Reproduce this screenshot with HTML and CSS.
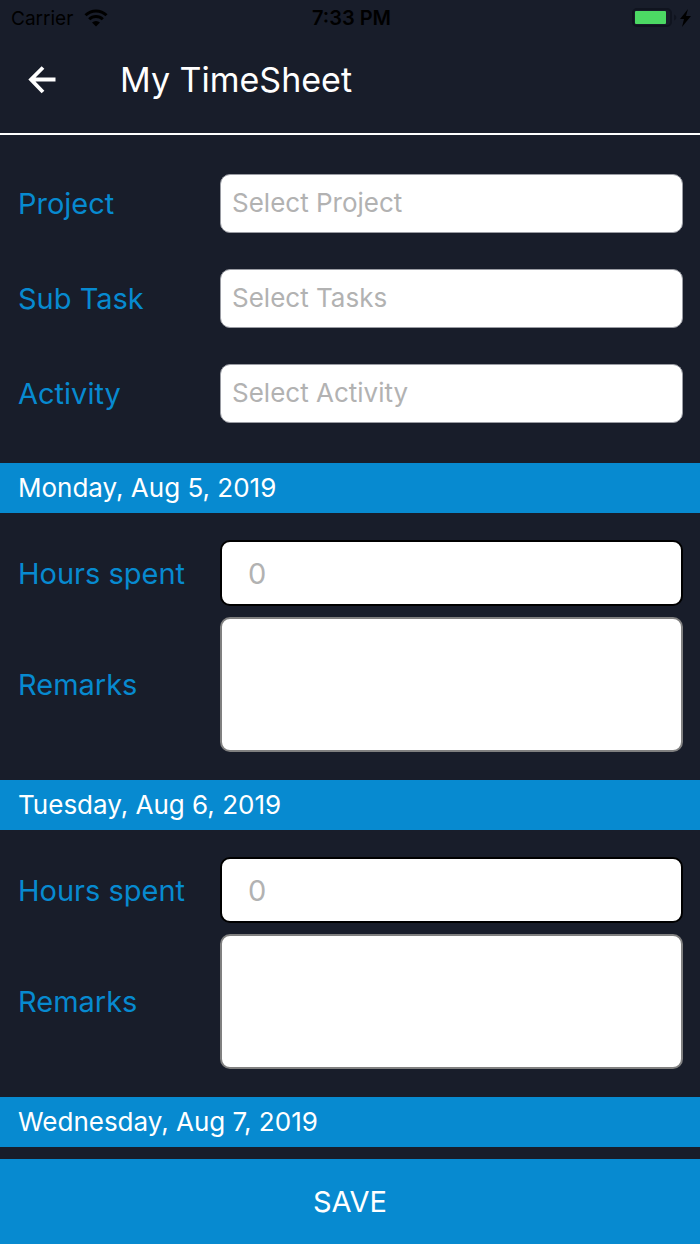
FILE: index.html
```html
<!DOCTYPE html>
<html lang="en">
<head>
<meta charset="utf-8">
<meta name="viewport" content="width=device-width, initial-scale=1">
<title>My TimeSheet</title>
<link rel="stylesheet" href="styles.css">
</head>
<body>
<div class="status">
  <div class="carrier">
    <span>Carrier</span>
    <svg class="wifi" viewBox="0 0 24 18" aria-hidden="true">
      <path d="M1.500 6.300a15 15 0 0 1 21 0M5.200 10.200a9.700 9.700 0 0 1 13.600 0" fill="none" stroke="#000" stroke-width="3"/>
      <path d="M12 17.500l-4-3.900a5.600 5.600 0 0 1 8 0z"/>
    </svg>
  </div>
  <time class="clock">7:33 PM</time>
  <svg class="battery" viewBox="0 0 60 20" aria-hidden="true">
    <rect x="1" y="1" width="38" height="17" rx="4" fill="none" stroke="#10141f" stroke-width="2"/>
    <rect x="3" y="3" width="31" height="13" rx="1" fill="#4cd964"/>
    <path d="M42 6.500c3 1 3 5 0 6z" fill="#10141f"/>
    <path d="M56 1l-8 10h4l-2 8 9-11h-5z"/>
  </svg>
</div>
<header class="header">
  <button class="back" type="button" aria-label="Back">
    <svg viewBox="0 0 28 28" aria-hidden="true"><path d="M15 1.500L3 13.500l12 12.500M3 13.500h24.500" fill="none" stroke="#fff" stroke-width="3.800"/></svg>
  </button>
  <h1 class="title">My TimeSheet</h1>
</header>
<form class="form">
  <section class="selectors">
    <div class="row"><label class="label" for="project">Project</label><input class="field picker" id="project" placeholder="Select Project"></div>
    <div class="row"><label class="label" for="task">Sub Task</label><input class="field picker" id="task" placeholder="Select Tasks"></div>
    <div class="row"><label class="label" for="activity">Activity</label><input class="field picker" id="activity" placeholder="Select Activity"></div>
  </section>
  <section>
    <h2 class="day">Monday, Aug 5, 2019</h2>
    <div class="entry">
      <div class="row"><label class="label" for="hours1">Hours spent</label><input class="field hours" id="hours1" inputmode="decimal" placeholder="0"></div>
      <div class="row"><label class="label" for="remarks1">Remarks</label><textarea class="field remarks" id="remarks1"></textarea></div>
    </div>
  </section>
  <section>
    <h2 class="day">Tuesday, Aug 6, 2019</h2>
    <div class="entry">
      <div class="row"><label class="label" for="hours2">Hours spent</label><input class="field hours" id="hours2" inputmode="decimal" placeholder="0"></div>
      <div class="row"><label class="label" for="remarks2">Remarks</label><textarea class="field remarks" id="remarks2"></textarea></div>
    </div>
  </section>
  <section>
    <h2 class="day">Wednesday, Aug 7, 2019</h2>
  </section>
  <button class="save" type="button">SAVE</button>
</form>
</body>
</html>
```
FILE: styles.css
```css
* {
  box-sizing: border-box;
}

body {
  margin: 0;
  min-height: 100vh;
  display: flex;
  flex-direction: column;
  background: #181d2a;
  color: #fff;
  font-family: Inter, "Liberation Sans", sans-serif;
}

.status {
  display: grid;
  grid-template-columns: 1fr auto 1fr;
  align-items: center;
  height: 36px;
  padding: 0 8px 0 11px;
  color: #000;
  font-size: 19px;
}

.carrier {
  display: flex;
  align-items: center;
  gap: 11px;
}

.wifi {
  width: 24px;
  height: 18px;
}

.clock {
  font-size: 20px;
  font-weight: 600;
}

.battery {
  justify-self: end;
  width: 60px;
  height: 20px;
}

.header {
  display: flex;
  align-items: center;
  gap: 64px;
  height: 99px;
  padding: 0 28px 10px;
  border-bottom: 2px solid #fff;
}

.back {
  display: flex;
  padding: 0;
  border: 0;
  background: none;
}

.back svg {
  width: 28px;
  height: 28px;
}

.title {
  margin: 0;
  font-size: 34px;
  font-weight: 400;
}

.form {
  flex: 1;
  display: flex;
  flex-direction: column;
}

.selectors {
  display: grid;
  gap: 36px;
  padding: 39px 0 40px;
}

.row {
  display: grid;
  grid-template-columns: 202px 1fr;
  align-items: center;
  padding: 0 17px 0 18px;
}

.label {
  color: #078ad0;
  font-size: 29px;
}

.field {
  display: block;
  width: 100%;
  margin: 0;
  border: 1px solid #9a9ca3;
  border-radius: 10px;
  background: #fff;
  color: #000;
  font-family: inherit;
}

.field::placeholder {
  color: #b2b2b2;
  opacity: 1;
}

.picker {
  height: 59px;
  padding: 0 11px 2px;
  font-size: 26px;
}

.hours {
  height: 66px;
  padding: 0 26px;
  border: 2px solid #000;
  font-size: 29px;
}

.remarks {
  height: 135px;
  padding: 12px;
  border: 2px solid #808080;
  font-size: 26px;
  resize: none;
}

.day {
  margin: 0;
  padding: 0 18px;
  background: #078ad0;
  font-size: 26px;
  font-weight: 400;
  line-height: 50px;
}

.entry {
  display: grid;
  gap: 11px;
  padding: 27px 0 28px;
}

.save {
  position: sticky;
  bottom: 0;
  height: 85px;
  margin-top: auto;
  border: 0;
  background: #078ad0;
  color: #fff;
  font-family: inherit;
  font-size: 29px;
}
```
